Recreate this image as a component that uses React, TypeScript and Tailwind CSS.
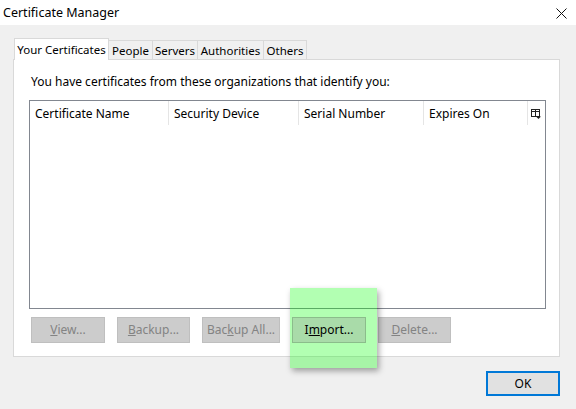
import React from "react";

const font = { fontFamily: '"Noto Sans", "Open Sans", sans-serif' };

function Btn({ w, children, green }: { w: string; children: React.ReactNode; green?: boolean }) {
  return (
    <div
      className={
        "h-[26px] flex items-center justify-center border text-[12px] " +
        w +
        (green
          ? " bg-[#a9dba9] border-[#8bbd8b] text-black relative z-20"
          : " bg-[#cccccc] border-[#bfbfbf] text-[#838383]")
      }
    >
      {children}
    </div>
  );
}

function Col({ w, label, last }: { w: string; label: string; last?: boolean }) {
  return (
    <div className={"h-full flex items-center pl-[5px] pt-[2px] " + w + (last ? "" : " border-r border-[#e5e5e5]")}>
      {label}
    </div>
  );
}

export default function App() {
  return (
    <div className="relative w-[576px] h-[409px] bg-[#f0f0f0] flex flex-col text-black text-[12px] overflow-hidden" style={font}>
      {/* title bar */}
      <div className="h-[25px] bg-white flex items-center justify-between pl-[3px] pr-[9px] pt-[1px] shrink-0">
        <span className="text-[12.5px] leading-none">Certificate Manager</span>
        <svg width="11" height="11" viewBox="0 0 11 11">
          <path d="M0.5 0.5 L10.5 10.5 M10.5 0.5 L0.5 10.5" stroke="#111" strokeWidth="1" />
        </svg>
      </div>

      <div className="pl-[13px] pt-[13px] flex flex-col">
        {/* tabs */}
        <div className="flex items-end h-[21px] pl-[1px] relative z-10 text-[11.5px]">
          <div className="w-[95px] h-[22px] -mb-px bg-white border border-b-0 border-[#d9d9d9] flex items-center justify-center">
            Your Certificates
          </div>
          <div className="w-[44px] h-[19px] border border-l-0 border-[#d9d9d9] border-b-0 flex items-center justify-center pt-[1px]">People</div>
          <div className="w-[45px] h-[19px] border border-l-0 border-[#d9d9d9] border-b-0 flex items-center justify-center pt-[1px]">Servers</div>
          <div className="w-[66px] h-[19px] border border-l-0 border-[#d9d9d9] border-b-0 flex items-center justify-center pt-[1px]">Authorities</div>
          <div className="w-[43px] h-[19px] border border-l-0 border-[#d9d9d9] border-b-0 flex items-center justify-center pt-[1px]">Others</div>
        </div>

        {/* panel */}
        <div className="w-[547px] h-[298px] bg-white border border-[#d9d9d9] flex flex-col">
          <div className="mt-[14px] ml-[17px] h-[16px] flex items-center">
            You have certificates from these organizations that identify you:
          </div>
          <div className="mt-[10px] ml-[15px] w-[517px] h-[209px] border border-[#828790] flex flex-col">
            <div className="h-[24px] flex items-stretch">
              <Col w="w-[139px]" label="Certificate Name" />
              <Col w="w-[130px]" label="Security Device" />
              <Col w="w-[125px]" label="Serial Number" />
              <Col w="w-[104px]" label="Expires On" />
              <div className="flex-1 flex items-center justify-center pr-[2px] pt-[2px]">
                <svg width="10" height="10" viewBox="0 0 10 10">
                  <rect x="0.5" y="0.5" width="8" height="7" fill="none" stroke="#222" />
                  <line x1="0.5" y1="2.5" x2="8.5" y2="2.5" stroke="#222" />
                  <line x1="4.5" y1="0.5" x2="4.5" y2="7.5" stroke="#222" />
                  <path d="M5 7.5 L10 7.5 L7.5 10 Z" fill="#222" />
                </svg>
              </div>
            </div>
          </div>
          <div className="mt-[8px] ml-[17px] flex gap-[12px]">
            <Btn w="w-[74px]"><span><u>V</u>iew...</span></Btn>
            <Btn w="w-[73px]"><span><u>B</u>ackup...</span></Btn>
            <Btn w="w-[78px]"><span>Bac<u>k</u>up All...</span></Btn>
            <Btn w="w-[74px]" green><span>I<u>m</u>port...</span></Btn>
            <Btn w="w-[73px]"><span><u>D</u>elete...</span></Btn>
          </div>
        </div>
      </div>

      <div className="mt-[14px] flex justify-end pr-[16px]">
        <div className="w-[74px] h-[25px] bg-[#e1e1e1] border-2 border-[#0078d7] flex items-center justify-center text-[12px]">
          OK
        </div>
      </div>

      {/* highlight overlay */}
      <div className="absolute left-[290px] top-[288px] w-[87px] h-[80px] bg-[rgba(0,255,0,0.3)] shadow-[2px_3px_6px_rgba(0,0,0,0.35)] z-10 pointer-events-none" />
    </div>
  );
}
